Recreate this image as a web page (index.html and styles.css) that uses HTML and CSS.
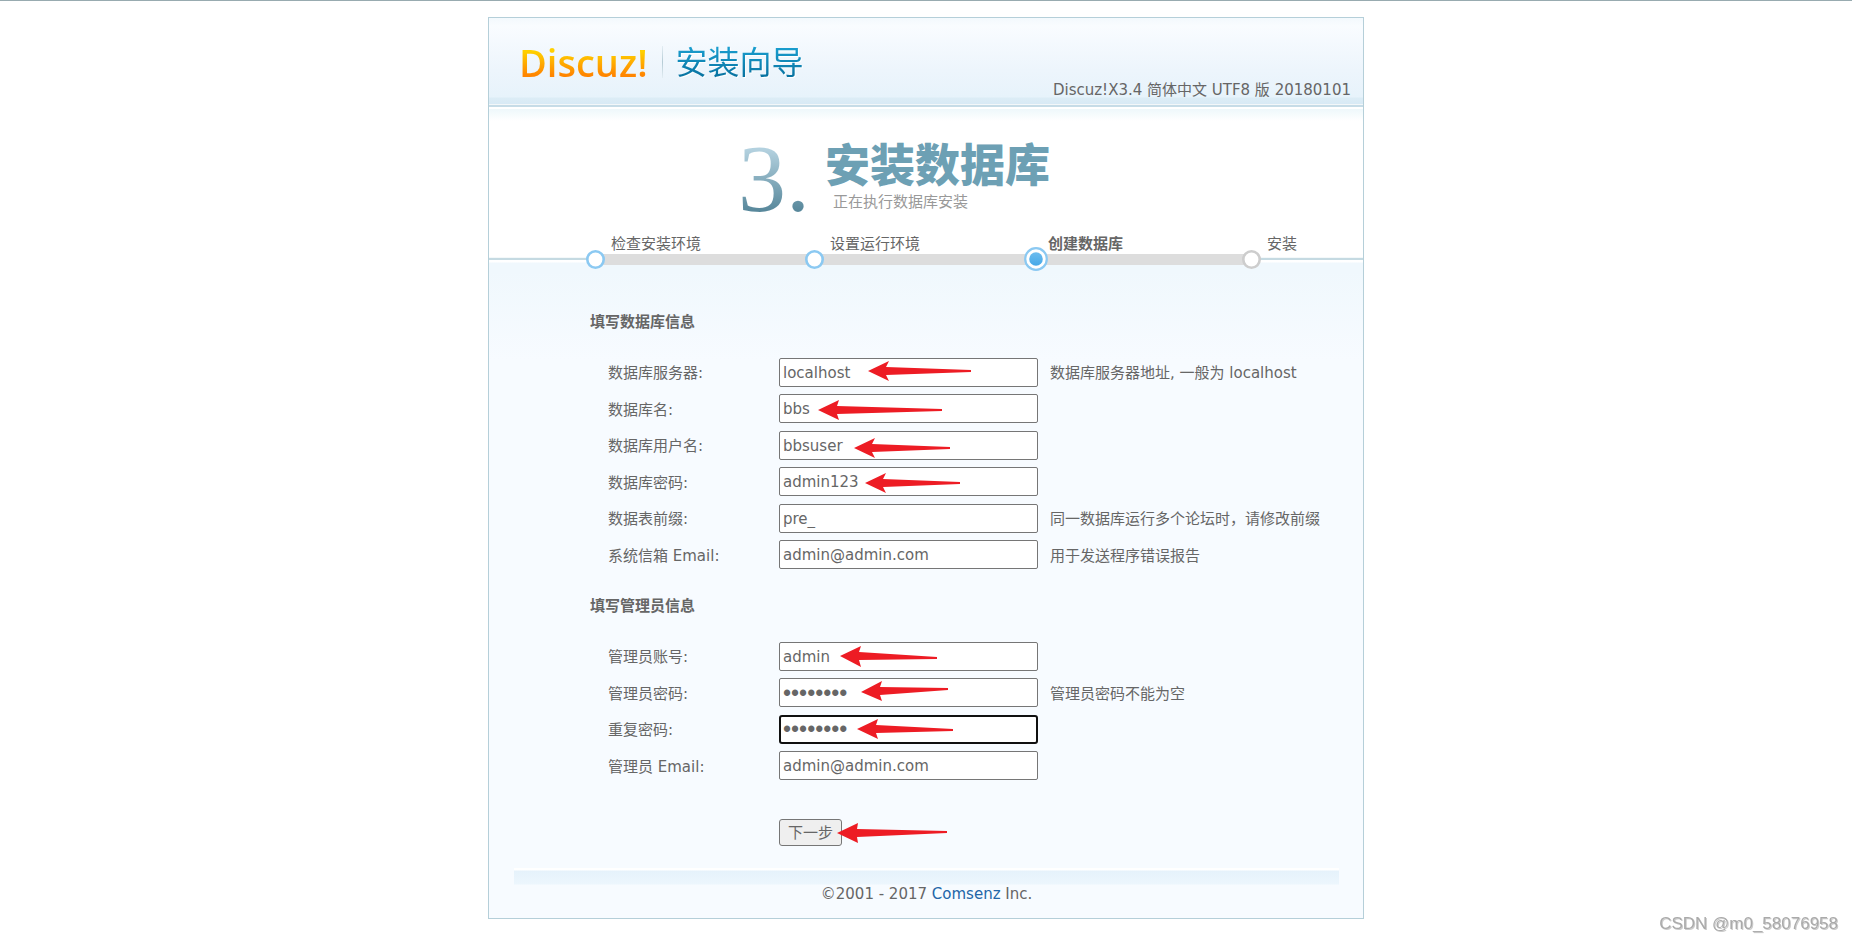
FILE: index.html
```html
<!DOCTYPE html>
<html lang="zh-CN">
<head>
<meta charset="utf-8">
<title>Discuz! 安装向导</title>
<link rel="stylesheet" href="styles.css">
</head>
<body>
<div class="container">
  <header class="header">
    <h1 class="logo"><span class="brand">Discuz!</span><span class="divider"></span><span class="guide">安装向导</span></h1>
    <p class="version">Discuz!X3.4 简体中文 UTF8 版 20180101</p>
  </header>

  <section class="setup">
    <span class="setup-number">3.</span>
    <div class="setup-text">
      <h2>安装数据库</h2>
      <p>正在执行数据库安装</p>
    </div>
  </section>

  <ol class="steps">
    <li class="step"><span class="step-label">检查安装环境</span>
      <div class="track"><svg class="dot" width="19" height="19" viewBox="0 0 19 19"><circle cx="9.5" cy="9.5" r="8.2" fill="#fff" stroke="#8bc9f2" stroke-width="2.6"/></svg><span class="bar"></span></div></li>
    <li class="step"><span class="step-label">设置运行环境</span>
      <div class="track"><svg class="dot" width="19" height="19" viewBox="0 0 19 19"><circle cx="9.5" cy="9.5" r="8.2" fill="#fff" stroke="#8bc9f2" stroke-width="2.6"/></svg><span class="bar"></span></div></li>
    <li class="step current"><span class="step-label">创建数据库</span>
      <div class="track"><svg class="dot" width="24" height="24" viewBox="0 0 24 24"><defs><linearGradient id="core" x2="0" y2="1"><stop stop-color="#6dbcee"/><stop offset="1" stop-color="#46a9e8"/></linearGradient></defs><circle cx="12" cy="12" r="10.8" fill="#fff" stroke="#8bc9f2" stroke-width="2.2"/><circle cx="12" cy="12" r="6.8" fill="url(#core)"/></svg><span class="bar"></span></div></li>
    <li class="step"><span class="step-label">安装</span>
      <div class="track"><svg class="dot" width="19" height="19" viewBox="0 0 19 19"><circle cx="9.5" cy="9.5" r="8.2" fill="#fff" stroke="#cdcdcd" stroke-width="2.6"/></svg></div></li>
  </ol>

  <main class="main">
    <form class="form">
      <h3>填写数据库信息</h3>
      <div class="fields fields-db">
        <div class="row"><label for="dbhost">数据库服务器:</label><input id="dbhost" type="text" value="localhost"><span>数据库服务器地址, 一般为 localhost</span></div>
        <div class="row"><label for="dbname">数据库名:</label><input id="dbname" type="text" value="bbs"></div>
        <div class="row"><label for="dbuser">数据库用户名:</label><input id="dbuser" type="text" value="bbsuser"></div>
        <div class="row"><label for="dbpw">数据库密码:</label><input id="dbpw" type="text" value="admin123"></div>
        <div class="row"><label for="prefix">数据表前缀:</label><input id="prefix" type="text" value="pre_"><span>同一数据库运行多个论坛时，请修改前缀</span></div>
        <div class="row"><label for="sysmail">系统信箱 Email:</label><input id="sysmail" type="text" value="admin@admin.com"><span>用于发送程序错误报告</span></div>
      </div>
      <h3>填写管理员信息</h3>
      <div class="fields fields-admin">
        <div class="row"><label for="user">管理员账号:</label><input id="user" type="text" value="admin"></div>
        <div class="row"><label for="pw">管理员密码:</label><input id="pw" type="password" value="admin123"><span>管理员密码不能为空</span></div>
        <div class="row"><label for="pw2">重复密码:</label><input id="pw2" class="focused" type="password" value="admin123"></div>
        <div class="row"><label for="email">管理员 Email:</label><input id="email" type="text" value="admin@admin.com"></div>
      </div>
      <div class="actions"><button type="button">下一步</button></div>
    </form>
    <footer class="footer">©2001 - 2017 <a href="#">Comsenz</a> Inc.</footer>
  </main>

  <svg class="arrows" width="876" height="902" viewBox="488 17 876 902" fill="#ed1c24" aria-hidden="true">
    <path d="M868 371 889 361 886 367 971 370V372L886 375 889 381Z"/>
    <path d="M818 410 839 400 837 406 942 409V411L837 414 839 420Z"/>
    <path d="M854 448 875 438 872 444 950 447V449L872 452 875 458Z"/>
    <path d="M865 483 886 473 883 479 960 482V484L883 487 886 493Z"/>
    <path d="M840 656 861 646 859 652 937 657V659L859 660 861 667Z"/>
    <path d="M861 692 882 681 880 687 948 688V690L880 695 882 701Z"/>
    <path d="M857 729 878 719 876 725 953 729V731L876 733 878 739Z"/>
    <path d="M837 833 858 823 857 829 947 831V833L857 837 858 843Z"/>
  </svg>
</div>
<div class="watermark">CSDN @m0_58076958</div>
</body>
</html>
```
FILE: styles.css
```css
* { box-sizing: border-box; }

body {
  margin: 0;
  padding: 16px 16px 22px;
  border-top: 1px solid #98abb0;
  background: #fff;
  color: #666;
  font: 15px/22px "DejaVu Sans", "Noto Sans CJK SC", sans-serif;
}

h1, h2, h3, p, ol { margin: 0; padding: 0; }

.container {
  position: relative;
  max-width: 876px;
  margin: 0 auto;
  border: 1px solid #b5cfd9;
}

.header {
  display: flex;
  justify-content: space-between;
  height: 89px;
  padding: 0 12px 0 30px;
  background: linear-gradient(#f3f9fd 0, #f9fcff 8px, #edf5fc 52px, #e7f3fb 79px, #dcedf6 80px, #d8eaf5 86px, #f3f7f9 86px, #f3f7f9 87px, #c6dce7 87px, #c6dce7 89px);
}

.logo {
  display: flex;
  align-items: center;
  height: 87px;
  font-weight: 400;
}

.brand {
  background: linear-gradient(#ffd000 30%, #ff8500 75%);
  background-clip: text;
  color: transparent;
  font: 600 38px/52px "Open Sans", sans-serif;
}

.divider {
  width: 1px;
  height: 32px;
  margin: 0 13px 0 14px;
  background: linear-gradient(#e3edf3, #b5cbd5, #e3edf3);
}

.guide {
  background: linear-gradient(#1a9fd0 20%, #08719f 80%);
  background-clip: text;
  color: transparent;
  filter: drop-shadow(1px 1px 0 #fff);
  font: 400 32px/48px "Noto Sans CJK SC", sans-serif;
  padding-bottom: 4px;
}

.version {
  align-self: flex-end;
  margin-bottom: 6px;
}

.setup {
  display: flex;
  height: 126px;
  padding: 28px 0 0 249px;
  background: linear-gradient(#fff 2px, #eef8fb 2px, #fff 14px);
}

.setup-number {
  width: 87px;
  background: linear-gradient(#b3d1df 15%, #4d7f93 85%);
  background-clip: text;
  color: transparent;
  font: 96px/88px "Liberation Serif", serif;
}

.setup h2 {
  color: #6da0b4;
  font: 900 45px/56px "Noto Sans CJK SC", sans-serif;
}

.setup p {
  padding-left: 8px;
  color: #999;
}

.steps {
  display: grid;
  grid-template-columns: 219px 219px 218px 1fr;
  padding-left: 97px;
  background: linear-gradient(#fff 24px, #e9f2f5 25px, #c5dae2 25px, #c5dae2 27px, #fff 27px, #fff 29px, #f0f8fd 30px);
  list-style: none;
}

.step-label {
  display: block;
  padding-left: 25px;
}

.track {
  display: flex;
  align-items: center;
  height: 24px;
  margin-top: -8px;
}

.dot {
  position: relative;
  z-index: 1;
  flex: none;
}

.bar {
  flex: 1;
  height: 11px;
  margin: 0 -4px;
  background: #ddd;
}

.current .step-label {
  padding-left: 24px;
  font-weight: 700;
}

.main {
  padding: 18px 24px 0 25px;
  background: linear-gradient(#f0f8fd 0, #f7fbff 90px);
}

.form { padding-left: 76px; }

.form h3 {
  padding-top: 1px;
  font-size: 15px;
  line-height: 64px;
}

.fields {
  display: grid;
  grid-auto-rows: 1fr;
  padding-left: 18px;
}

.fields-db { min-height: 219px; }
.fields-admin { min-height: 146px; }

.row {
  display: grid;
  grid-template-columns: 171px 259px 1fr;
  align-items: center;
}

.row label { padding-top: 2px; }
.row span { padding: 2px 0 0 12px; }

.row input {
  width: 100%;
  height: 29px;
  padding: 1px 3px 0;
  border: 1px solid #767676;
  border-radius: 2px;
  background: #fff;
  color: #666;
  font: inherit;
}

.row input[type="password"] {
  font-family: "Liberation Sans", sans-serif;
  font-size: 23px;
}

.row input.focused {
  padding: 0 2px;
  border: 2px solid #101010;
  border-radius: 3px;
  outline: none;
}

.actions { padding: 35px 0 22px 189px; }

button {
  display: block;
  height: 27px;
  padding: 0 8px;
  border: 1px solid #767676;
  border-radius: 3px;
  background: #efefef;
  color: #666;
  font: inherit;
}

.footer {
  padding: 15px 0 13px;
  background: linear-gradient(#fff 2px, #e6f2fb 3px, #ecf6fd 16px, transparent 17px);
  text-align: center;
}

.footer a {
  color: #2366a8;
  text-decoration: none;
}

.arrows {
  position: absolute;
  top: -1px;
  left: -1px;
  pointer-events: none;
}

.watermark {
  position: fixed;
  right: 14px;
  bottom: 8px;
  color: #aaa;
  font: 17px/20px "Liberation Sans", sans-serif;
  text-shadow: 1px 1px 0 #ccc;
}
```
